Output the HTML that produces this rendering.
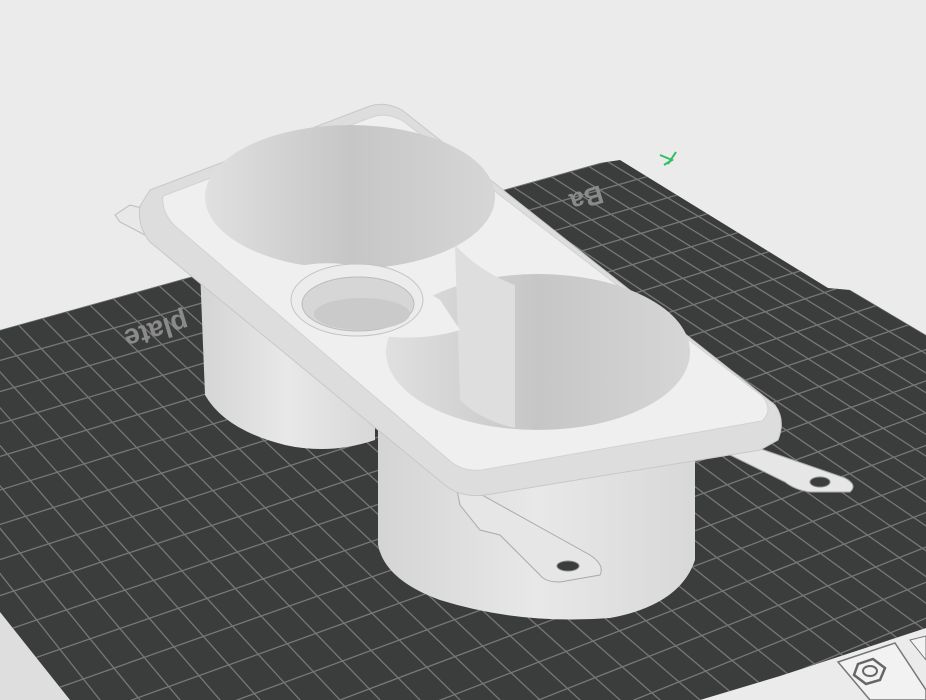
<!DOCTYPE html>
<html><head><meta charset="utf-8"><style>
html,body{margin:0;padding:0;background:#ebebeb;width:926px;height:700px;overflow:hidden}
svg{display:block}
</style></head><body>
<svg id="s" width="926" height="700" viewBox="0 0 926 700" xmlns="http://www.w3.org/2000/svg">
<defs>
<clipPath id="pc"><path d="M0,330 L600,163 L620,160 L828,288 L850,290 L926,335 L926,628 L780,676 L700,700 L70,700 L0,612 Z"/></clipPath>
<linearGradient id="cyl" x1="0" x2="1" y1="0" y2="0">
<stop offset="0" stop-color="#d4d4d4"/><stop offset="0.5" stop-color="#e8e8e8"/><stop offset="1" stop-color="#d8d8d8"/></linearGradient>
<linearGradient id="hole" x1="0" x2="1" y1="0" y2="0">
<stop offset="0" stop-color="#e0e0e0"/><stop offset="0.5" stop-color="#c6c6c6"/><stop offset="1" stop-color="#d6d6d6"/></linearGradient>
</defs>
<path d="M0,612 L70,700 L0,700 Z" fill="#dedede"/>
<path d="M0,330 L600,163 L620,160 L828,288 L850,290 L926,335 L926,628 L780,676 L700,700 L70,700 L0,612 Z" fill="#3b3c3c"/>
<g id="grid" clip-path="url(#pc)" stroke="#777" stroke-width="1.3"></g>
<text x="0" y="0" transform="translate(600,185) rotate(163)" font-family="Liberation Sans, sans-serif" font-weight="bold" font-size="26" fill="#8a8a8a">Ba</text>
<text x="0" y="0" transform="translate(185,312) rotate(163)" font-family="Liberation Sans, sans-serif" font-weight="bold" font-size="28" fill="#8a8a8a">plate</text>
<path d="M660,155 L672,160 L664,165 M676,152 L668,164" stroke="#2fbf5f" stroke-width="2" fill="none"/>
<path d="M838,662 L895,643 L926,690 L926,700 L870,700 Z" fill="#f2f2f2" stroke="#777" stroke-width="1.5"/>
<polygon points="858,664 873,659 885,668 880,680 866,684 854,675" fill="none" stroke="#666" stroke-width="2.5"/>
<ellipse cx="870" cy="671" rx="7" ry="5" fill="none" stroke="#666" stroke-width="2"/>
<path d="M910,640 L926,636 L926,660 Z" fill="#f2f2f2" stroke="#777"/>
<path d="M115,215 L130,205 L150,210 L145,235 L120,222 Z" fill="#e8e8e8" stroke="#bbb"/>
<path d="M735,440 L845,478 Q858,485 850,492 L810,492 Q795,490 785,482 L730,455 Z" fill="#e6e6e6" stroke="#aaa"/>
<ellipse cx="820" cy="482" rx="10" ry="5" fill="#3b3c3c" stroke="#888"/>
<path d="M200,270 L375,300 L375,440 Q330,455 285,445 Q225,430 205,395 Z" fill="url(#cyl)"/>
<path d="M378,420 L695,440 L695,560 Q680,605 610,618 Q520,625 440,600 Q385,580 378,545 Z" fill="url(#cyl)"/>
<path d="M455,480 L590,555 Q605,565 600,575 L560,582 Q545,582 540,575 L500,535 L480,530 L460,505 Z" fill="#e6e6e6" stroke="#aaa"/>
<ellipse cx="568" cy="566" rx="11" ry="5" fill="#3b3c3c" stroke="#888"/>
<path d="M150,190 L370,106 Q386,101 402,110 L775,405 Q786,420 778,440 L760,450 L485,495 Q462,498 446,486 L150,242 Q137,226 140,206 Z" fill="#dddddd" stroke="#c8c8c8"/>
<path d="M163,196 L372,117 Q388,112 403,121 L762,396 Q774,410 762,421 L482,470 Q463,472 450,461 L175,226 Q161,212 163,196 Z" fill="#efefef" stroke="#d2d2d2"/>
<ellipse cx="350" cy="197" rx="145" ry="72" fill="url(#hole)"/>
<ellipse cx="538" cy="352" rx="152" ry="78" fill="url(#hole)"/>
<path d="M455,245 Q480,272 515,285 L515,428 Q480,420 460,400 Z" fill="#dedede"/>
<path d="M290,268 Q360,250 440,300 L460,330 Q410,345 350,330 Z" fill="#efefef"/>
<ellipse cx="357" cy="300" rx="66" ry="36" fill="#ececec" stroke="#c4c4c4"/>
<ellipse cx="358" cy="304" rx="56" ry="27" fill="#d6d6d6" stroke="#bbb"/>
<ellipse cx="362" cy="314" rx="48" ry="16" fill="#cacaca"/>
</svg>
<script>
(function(){
var g=document.getElementById('grid'),h='';
var B=[-1177,-915];
for(var x=-900;x<=1600;x+=40){
 h+='<line x1="'+B[0]+'" y1="'+B[1]+'" x2="'+(B[0]+(x-B[0])*1.5)+'" y2="'+(B[1]+(700-B[1])*1.5)+'"/>';
}
var A=[5000,-1060];
for(var k=-2;k<30;k++){
 var y=330+k*30+k*k*0.4;
 var dx=0-A[0],dy=y-A[1];
 h+='<line x1="'+A[0]+'" y1="'+A[1]+'" x2="'+(A[0]+dx*1.3)+'" y2="'+(A[1]+dy*1.3)+'"/>';
}
g.innerHTML=h;
})();
</script>
</body></html>
